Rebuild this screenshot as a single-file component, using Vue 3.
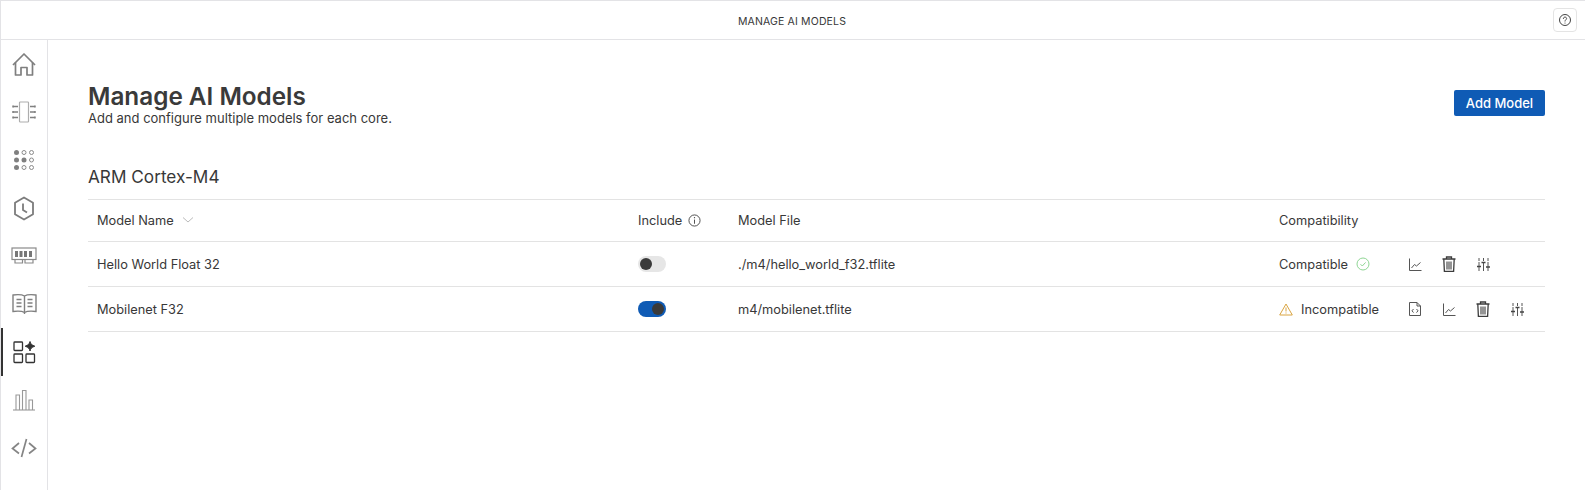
<script setup>
const navItems = ['home', 'chip', 'dots', 'clock', 'memory', 'book', 'models', 'chart', 'code']
</script>

<template>
  <div class="app">
    <header class="topbar">
      <span class="topbar-title">MANAGE AI MODELS</span>
      <button class="help-btn" aria-label="Help">
        <svg width="14" height="14" viewBox="0 0 14 14" fill="none" stroke="#444" stroke-width="1">
          <circle cx="7" cy="7" r="5.5" />
          <path d="M5.4 5.6c0-.9.7-1.5 1.6-1.5s1.6.6 1.6 1.4c0 1.2-1.6 1.3-1.6 2.6" stroke-linecap="round" />
          <circle cx="7" cy="10" r=".6" fill="#444" stroke="none" />
        </svg>
      </button>
    </header>

    <div class="body">
      <nav class="sidebar">
        <div v-for="item in navItems" :key="item" class="nav-item" :class="{ active: item === 'models' }">
          <svg v-if="item === 'home'" width="24" height="24" viewBox="0 0 24 24" fill="none" stroke="#7f7f7f" stroke-width="1.7" stroke-linejoin="round">
            <path d="M1 13 12 2l11 11" />
            <path d="M3.500 10.500V23h5.500v-7.500h6V23h5.500V10.500" />
          </svg>
          <svg v-else-if="item === 'chip'" width="24" height="22" viewBox="0 0 24 22" fill="none" stroke="#808080" stroke-width="1.200">
            <rect x="7.500" y="1" width="9" height="20" rx=".8" stroke="#adadad" />
            <path d="M1 5.500h5M1 11h5M1 16.500h5M18 5.500h5M18 11h5M18 16.500h5" stroke-width="1.300" />
            <path d="M1 4.500v2M1 10v2M1 15.500v2M23 4.500v2M23 10v2M23 15.500v2" stroke-width="1.500" />
          </svg>
          <svg v-else-if="item === 'dots'" width="22" height="22" viewBox="0 0 22 22" fill="none" stroke="#8a8a8a" stroke-width="1">
            <circle cx="3.500" cy="3.500" r="2.500" fill="#808080" stroke="none" />
            <circle cx="11" cy="3.500" r="2" />
            <circle cx="18.500" cy="3.500" r="2" />
            <circle cx="3.500" cy="11" r="2.500" fill="#808080" stroke="none" />
            <circle cx="11" cy="11" r="2.500" fill="#808080" stroke="none" />
            <circle cx="18.500" cy="11" r="2" />
            <circle cx="3.500" cy="18.500" r="2.500" fill="#808080" stroke="none" />
            <circle cx="11" cy="18.500" r="2" />
            <circle cx="18.500" cy="18.500" r="2" />
          </svg>
          <svg v-else-if="item === 'clock'" width="22" height="25" viewBox="0 0 22 25" fill="none" stroke="#7c7c7c" stroke-width="1.800">
            <path d="M11 1.500 20 6.800v11.400l-9 5.300-9-5.300V6.800z" stroke-linejoin="round" />
            <path d="M10 7.500V14l4 2.500" />
          </svg>
          <svg v-else-if="item === 'memory'" width="26" height="18" viewBox="0 0 26 18" fill="none" stroke="#8a8a8a" stroke-width="1.200">
            <rect x="1" y="1" width="24" height="11.500" />
            <path d="M5.500 4v6M10 4v6M14.500 4v6M19.500 4v6" stroke-width="3" stroke="#777" />
            <path d="M4 12.500V16h7.500v-3.500M14 12.500V16h8v-3.500" />
          </svg>
          <svg v-else-if="item === 'book'" width="25" height="22" viewBox="0 0 25 22" fill="none" stroke="#808080" stroke-width="1.400">
            <path d="M12.500 3C10 1.500 5 1.500 1 2v16.500c4-.5 9-.5 11.500 1 2.500-1.500 7.500-1.500 11.500-1V2c-4-.5-9-.5-11.500 1zM12.500 3v18" />
            <path d="M4.500 6.500h5M4.500 10h5M4.500 13.500h5M15.500 6.500h5M15.500 10h5M15.500 13.500h5" />
          </svg>
          <svg v-else-if="item === 'models'" width="23" height="23" viewBox="0 0 23 23" fill="none" stroke="#333" stroke-width="1.300">
            <rect x="1" y="1" width="8.500" height="8.500" rx=".8" />
            <rect x="1" y="13" width="8.500" height="8.500" rx=".8" />
            <rect x="13" y="13" width="8.500" height="8.500" rx=".8" />
            <path d="M17 .5c.6 2.500 1.700 3.600 4.800 4.700-3.100 1.100-4.200 2.200-4.800 4.800-.6-2.600-1.700-3.700-4.800-4.800 3.100-1.100 4.200-2.200 4.800-4.700z" fill="#333" stroke="#333" stroke-width="1" />
          </svg>
          <svg v-else-if="item === 'chart'" width="22" height="22" viewBox="0 0 22 22" fill="none" stroke="#999" stroke-width="1.100">
            <path d="M0 21h22" />
            <path d="M3 21V6h3.500v15M9.500 21V1.500H13V21M16 21V11h3.500v10" />
          </svg>
          <svg v-else width="26" height="20" viewBox="0 0 26 20" fill="none" stroke="#858585" stroke-width="1.700">
            <path d="M8 5 1.500 10.500 8 15.500M18 5l6.500 5.500L18 15.500M15.500 1l-5 18" />
          </svg>
        </div>
      </nav>

      <main class="content">
        <div class="page-head">
          <div>
            <h1>Manage AI Models</h1>
            <p>Add and configure multiple models for each core.</p>
          </div>
          <button class="add-btn">Add Model</button>
        </div>

        <h2>ARM Cortex-M4</h2>

        <div class="table">
          <div class="row head">
            <div class="cell">
              Model Name
              <svg class="sort" width="12" height="6" viewBox="0 0 12 6" fill="none" stroke="#bbb"><path d="M1 .5 6 5l5-4.500" /></svg>
            </div>
            <div class="cell">
              Include
              <svg class="info" width="13" height="13" viewBox="0 0 14 14" fill="none" stroke="#444">
                <circle cx="7" cy="7" r="6" />
                <path d="M7 6v4.500" />
                <circle cx="7" cy="4" r=".7" fill="#444" stroke="none" />
              </svg>
            </div>
            <div class="cell">Model File</div>
            <div class="cell">Compatibility</div>
            <div></div>
          </div>

          <div class="row">
            <div class="cell">Hello World Float 32</div>
            <div class="cell"><span class="toggle"><i /></span></div>
            <div class="cell">./m4/hello_world_f32.tflite</div>
            <div class="cell">
              <span>Compatible</span>
              <svg class="ok" width="14" height="14" viewBox="0 0 14 14" fill="none" stroke="#8fd694" stroke-width="1">
                <circle cx="7" cy="7" r="6" />
                <path d="M4.500 7.200 6.300 9l3.300-3.600" />
              </svg>
            </div>
            <div class="actions">
              <span class="slot">
                <svg width="13" height="13" viewBox="0 0 13 13" fill="none" stroke="#555"><path d="M.5.500v12h12M2.500 10l3-3.500 2 1.500 4-3.500" /></svg>
              </span>
              <span class="slot">
                <svg width="14" height="16" viewBox="0 0 14 16" fill="none" stroke="#3c3c3c" stroke-width="1.300">
                  <path d="M.5 3h13M4.500 3V1h5v2M1.800 3l.6 12.500h9.200l.6-12.500" />
                  <path d="M5 5.500v8M7 5.500v8M9 5.500v8" stroke-width="1.100" />
                </svg>
              </span>
              <span class="slot">
                <svg width="13" height="13" viewBox="0 0 13 13" fill="none" stroke="#555" stroke-width="1">
                  <path d="M2 0v13M6.500 0v13M11 0v13" stroke-dasharray="3 1 9" />
                  <path d="M0 8.500h4M4.500 4.500h4M9 9h4" stroke-width="1.500" stroke="#444" />
                </svg>
              </span>
            </div>
          </div>

          <div class="row">
            <div class="cell">Mobilenet F32</div>
            <div class="cell"><span class="toggle on"><i /></span></div>
            <div class="cell">m4/mobilenet.tflite</div>
            <div class="cell">
              <svg class="warn" width="14" height="13" viewBox="0 0 14 13" fill="none" stroke="#d9a441" stroke-width="1">
                <path d="M7 1 13.300 12H.7z" stroke-linejoin="round" />
                <path d="M7 4.500v4M7 9.500v1" />
              </svg>
              <span>Incompatible</span>
            </div>
            <div class="actions">
              <span class="slot">
                <svg width="12" height="14" viewBox="0 0 12 14" fill="none" stroke="#555">
                  <path d="M.5.500H8L11.500 4v9.500H.5zM8 .500V4h3.500" />
                  <path d="M4.500 7 3 8.800l1.500 1.800M7.500 7 9 8.800l-1.500 1.800" />
                </svg>
              </span>
              <span class="slot">
                <svg width="13" height="13" viewBox="0 0 13 13" fill="none" stroke="#555"><path d="M.5.500v12h12M2.500 10l3-3.500 2 1.500 4-3.500" /></svg>
              </span>
              <span class="slot">
                <svg width="14" height="16" viewBox="0 0 14 16" fill="none" stroke="#3c3c3c" stroke-width="1.300">
                  <path d="M.5 3h13M4.500 3V1h5v2M1.800 3l.6 12.500h9.200l.6-12.500" />
                  <path d="M5 5.500v8M7 5.500v8M9 5.500v8" stroke-width="1.100" />
                </svg>
              </span>
              <span class="slot">
                <svg width="13" height="13" viewBox="0 0 13 13" fill="none" stroke="#555" stroke-width="1">
                  <path d="M2 0v13M6.500 0v13M11 0v13" stroke-dasharray="3 1 9" />
                  <path d="M0 8.500h4M4.500 4.500h4M9 9h4" stroke-width="1.500" stroke="#444" />
                </svg>
              </span>
            </div>
          </div>
        </div>
      </main>
    </div>
  </div>
</template>

<style>
html, body {
  margin: 0;
  background: #fff;
}
</style>

<style scoped>
.app {
  width: 1585px;
  height: 490px;
  display: flex;
  flex-direction: column;
  box-sizing: border-box;
  overflow: hidden;
  font-family: Inter, "Noto Sans", sans-serif;
  color: #383838;
  border-left: 1px solid #e3e3e6;
}

.topbar {
  height: 40px;
  flex: none;
  box-sizing: border-box;
  border-top: 1px solid #e3e3e6;
  border-bottom: 1px solid #e3e3e6;
  padding-top: 2px;
  display: flex;
  align-items: center;
  justify-content: center;
  position: relative;
}

.topbar-title {
  font-size: 10.500px;
  letter-spacing: 0.15px;
  margin-right: 2px;
}

.help-btn {
  position: absolute;
  right: 8px;
  top: 7px;
  width: 24px;
  height: 24px;
  padding: 0;
  background: #fff;
  border: 1px solid #e4e4e4;
  border-radius: 4px;
  display: flex;
  align-items: center;
  justify-content: center;
}

.body {
  flex: 1;
  display: flex;
}

.sidebar {
  width: 47px;
  flex: none;
  box-sizing: border-box;
  border-right: 1px solid #e3e3e6;
  display: flex;
  flex-direction: column;
}

.nav-item {
  height: 48px;
  display: flex;
  align-items: center;
  justify-content: center;
  position: relative;
}

.nav-item.active::before {
  content: "";
  position: absolute;
  left: 0;
  top: 0;
  width: 2px;
  height: 48px;
  background: #333;
}

.content {
  flex: 1;
  padding: 41px 40px 0;
  min-width: 0;
}

.page-head {
  display: flex;
  justify-content: space-between;
  align-items: flex-start;
}

h1 {
  margin: 0;
  font-size: 24.300px;
  font-weight: 600;
  line-height: 30px;
  color: #3a3a3a;
}

.page-head p {
  margin: 0;
  font-size: 13px;
  line-height: 15px;
}

.add-btn {
  margin-top: 9px;
  width: 91px;
  height: 26px;
  background: #0f5bb5;
  color: #fff;
  border: none;
  border-radius: 2px;
  font-family: inherit;
  font-size: 13px;
  font-weight: 500;
  padding: 0;
}

h2 {
  margin: 39px 0 0;
  font-size: 17.200px;
  font-weight: 400;
  line-height: 24px;
}

.table {
  margin-top: 10px;
  border-top: 1px solid #e3e3e3;
  font-size: 12.800px;
}

.row {
  display: grid;
  grid-template-columns: 541px 100px 541px 128px 1fr;
  height: 45px;
  align-items: center;
  border-bottom: 1px solid #e3e3e3;
  box-sizing: border-box;
}

.row.head {
  height: 42px;
  padding-bottom: 1px;
}

.cell {
  padding-left: 9px;
  display: flex;
  align-items: center;
}

.sort {
  margin-left: 8px;
}

.info {
  margin-left: 6px;
}

.toggle {
  width: 28px;
  height: 16px;
  border-radius: 8px;
  background: #e6e6e6;
  display: flex;
  align-items: center;
  padding: 0 2px;
  box-sizing: border-box;
}

.toggle i {
  width: 12px;
  height: 12px;
  border-radius: 50%;
  background: #3a3a3a;
}

.toggle.on {
  background: #0f5bb5;
  justify-content: flex-end;
}

.ok {
  margin-left: 8px;
}

.warn {
  margin-right: 8px;
}

.actions {
  display: flex;
  align-items: center;
}

.slot {
  width: 34px;
  display: flex;
  justify-content: center;
}
</style>
